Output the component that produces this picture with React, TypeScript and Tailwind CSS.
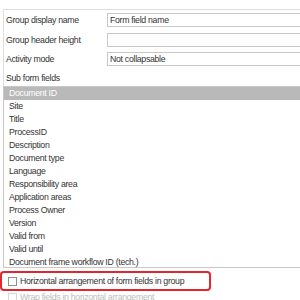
import React from 'react';

const fields = [
  'Document ID',
  'Site',
  'Title',
  'ProcessID',
  'Description',
  'Document type',
  'Language',
  'Responsibility area',
  'Application areas',
  'Process Owner',
  'Version',
  'Valid from',
  'Valid until',
  'Document frame workflow ID (tech.)',
];

const Row: React.FC<{ label: string; value?: string; className?: string }> = ({ label, value, className }) => (
  <div className={`flex items-center h-[14px] ${className ?? ''}`}>
    <span className="w-[103px] pl-[2px] shrink-0">{label}</span>
    <div className="flex-1 h-[14px] border border-[#c8c8c8] border-r-0 flex items-center pl-[2px]">{value}</div>
  </div>
);

export default function App() {
  return (
    <div
      className="w-[300px] h-[300px] bg-white overflow-hidden text-[8.75px] tracking-[-0.3px] leading-none text-[#333333] pt-[9px]"
      style={{ fontFamily: '"Liberation Sans", Arial, sans-serif' }}
    >
      <div className="ml-[3px] border-t border-l border-[#dedede] pt-[3px]">
        <Row label="Group display name" value="Form field name" />
        <Row label="Group header height" className="mt-[6px]" />
        <Row label="Activity mode" value="Not collapsable" className="mt-[5px]" />
        <div className="h-[20px] flex items-end pb-[3px] pl-[2px]">Sub form fields</div>
      </div>
      <div className="ml-[3px] border border-r-0 border-[#c8c8c8] h-[182px] overflow-hidden">
        {fields.map((f, i) => (
          <div
            key={f}
            className={`h-[13px] flex items-center pl-[5px] ${i === 0 ? 'bg-[#b9b9b9] text-white' : ''}`}
          >
            {f}
          </div>
        ))}
      </div>
      <div className="mt-[3px] w-[211px] h-[20px] border-2 border-[#e3262e] rounded-[4px] flex items-center pl-[6px] gap-[3px]">
        <span className="w-[9px] h-[9px] border border-[#8f8f8f] bg-white shrink-0" />
        <span>Horizontal arrangement of form fields in group</span>
      </div>
      <div className="mt-[2px] flex items-center pl-[8px] gap-[3px] text-[#bdbdbd]">
        <span className="w-[9px] h-[9px] border border-[#d6d6d6] shrink-0" />
        <span>Wrap fields in horizontal arrangement</span>
      </div>
    </div>
  );
}
